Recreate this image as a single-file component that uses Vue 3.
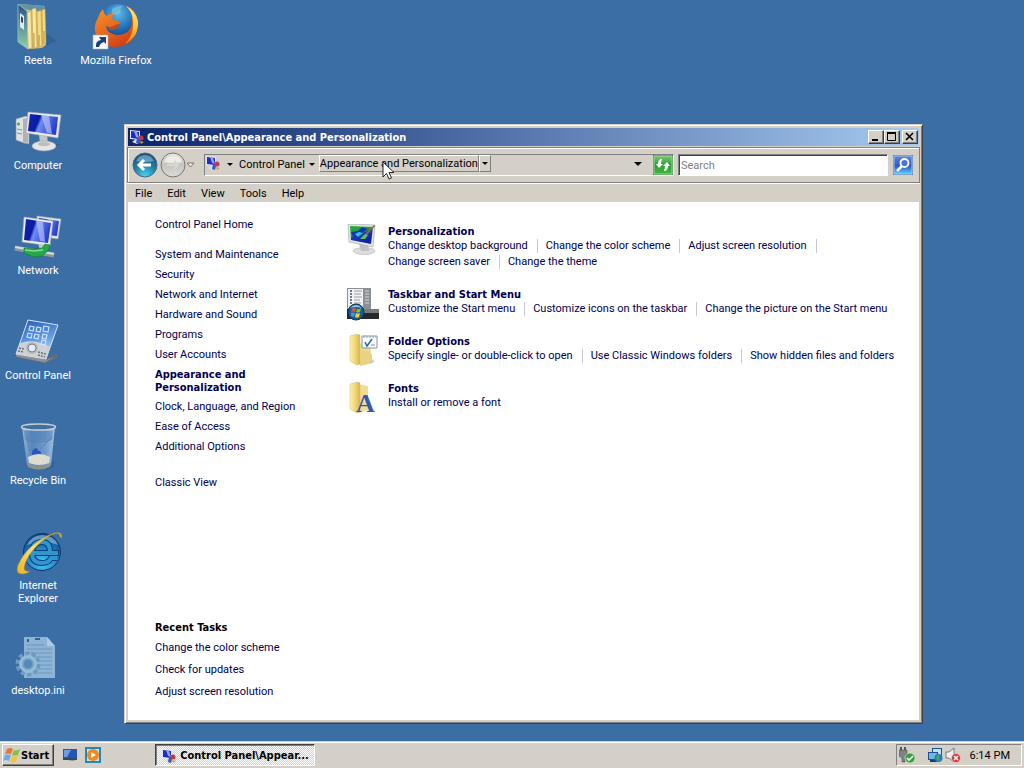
<template>
  <div class="screen">
    <svg class="sprite" aria-hidden="true">
      <defs>
        <linearGradient id="g-screen" x1="0" y1="0" x2="1" y2="0.3">
          <stop offset="0" stop-color="#1226b8" />
          <stop offset="0.4" stop-color="#0a1aa0" />
          <stop offset="0.5" stop-color="#6f8df0" />
          <stop offset="1" stop-color="#2a3fd0" />
        </linearGradient>
        <linearGradient id="g-glass" x1="0" y1="0" x2="0.3" y2="1">
          <stop offset="0" stop-color="#2456b8" />
          <stop offset="0.6" stop-color="#5f9be6" />
          <stop offset="1" stop-color="#b9dcfa" />
        </linearGradient>
        <linearGradient id="g-folder" x1="0" y1="0" x2="1" y2="0">
          <stop offset="0" stop-color="#fdf0b0" />
          <stop offset="0.5" stop-color="#f1d877" />
          <stop offset="1" stop-color="#d9b64e" />
        </linearGradient>
        <linearGradient id="g-cover" x1="0" y1="0" x2="0" y2="1">
          <stop offset="0" stop-color="#234f7c" />
          <stop offset="0.45" stop-color="#5a8fa0" />
          <stop offset="1" stop-color="#8fd0a4" />
        </linearGradient>
        <linearGradient id="g-fox" x1="0" y1="0" x2="0.6" y2="1">
          <stop offset="0" stop-color="#f49a2c" />
          <stop offset="0.6" stop-color="#e8641c" />
          <stop offset="1" stop-color="#cf3f16" />
        </linearGradient>
        <linearGradient id="g-tail" x1="0" y1="0" x2="0" y2="1">
          <stop offset="0" stop-color="#fbe89a" />
          <stop offset="0.6" stop-color="#fbc02c" />
          <stop offset="1" stop-color="#ee7f1d" />
        </linearGradient>
        <radialGradient id="g-globe" cx="0.5" cy="0.25" r="0.7">
          <stop offset="0" stop-color="#5fb8e4" />
          <stop offset="0.6" stop-color="#1f6db4" />
          <stop offset="1" stop-color="#133a78" />
        </radialGradient>
        <radialGradient id="g-ie" cx="0.5" cy="0.8" r="0.8">
          <stop offset="0" stop-color="#4cc8f4" />
          <stop offset="0.5" stop-color="#1c86cc" />
          <stop offset="1" stop-color="#0b3f80" />
        </radialGradient>
        <linearGradient id="g-ring" x1="1" y1="0" x2="0" y2="1">
          <stop offset="0" stop-color="#c8a040" />
          <stop offset="0.5" stop-color="#fbe27a" />
          <stop offset="1" stop-color="#eeb21c" />
        </linearGradient>
        <radialGradient id="g-back" cx="0.5" cy="0.95" r="0.9">
          <stop offset="0" stop-color="#4fd0f0" />
          <stop offset="0.5" stop-color="#2285ae" />
          <stop offset="1" stop-color="#1b4f7c" />
        </radialGradient>
        <linearGradient id="g-forward" x1="0" y1="0" x2="0" y2="1">
          <stop offset="0" stop-color="#e9e8e4" />
          <stop offset="0.5" stop-color="#c6c4be" />
          <stop offset="1" stop-color="#dedcd7" />
        </linearGradient>
        <linearGradient id="g-green" x1="0" y1="0" x2="0" y2="1">
          <stop offset="0" stop-color="#7cc878" />
          <stop offset="0.5" stop-color="#2c9c34" />
          <stop offset="1" stop-color="#43b83c" />
        </linearGradient>
        <linearGradient id="g-find" x1="0" y1="0" x2="0" y2="1">
          <stop offset="0" stop-color="#5f86dc" />
          <stop offset="0.55" stop-color="#2d56c8" />
          <stop offset="1" stop-color="#55d4f4" />
        </linearGradient>
        <linearGradient id="g-paint" x1="0" y1="0" x2="0.5" y2="1">
          <stop offset="0" stop-color="#2fae3a" />
          <stop offset="0.5" stop-color="#1c9a3c" />
          <stop offset="0.55" stop-color="#1a37c8" />
          <stop offset="1" stop-color="#1020a0" />
        </linearGradient>
        <linearGradient id="g-bin" x1="0" y1="0" x2="1" y2="0">
          <stop offset="0" stop-color="#b4cfe8" stop-opacity="0.8" />
          <stop offset="0.3" stop-color="#6c96c8" stop-opacity="0.6" />
          <stop offset="0.7" stop-color="#89aedb" stop-opacity="0.7" />
          <stop offset="1" stop-color="#c3d9ee" stop-opacity="0.8" />
        </linearGradient>
      </defs>

      <symbol id="user-folder" viewBox="0 0 48 48">
        <path d="M32 30l10 8-12 6z" fill="#1d4674" opacity="0.3" />
        <path d="M5 1l26 2 1 39-4 3-14 1z" fill="#d8c070" />
        <path d="M5 1l26 2v6L8 6z" fill="#5e93a8" />
        <path d="M13 10l4-2 1 37-4 1zM18 6l4-1 1 39-4 2z" fill="#f8e6a0" stroke="#b8943c" stroke-width="0.5" />
        <path d="M23 9l4-2 1 36-4 2zM28 7l3-1 1 34-3 4z" fill="#f3da84" stroke="#b8943c" stroke-width="0.5" />
        <path d="M20 30v15M25 32v12M30 28v13" stroke="#a57f2c" stroke-width="0.8" />
        <path d="M4 1l9 7 1 38-10-7z" fill="url(#g-cover)" stroke="#9fc6cc" stroke-width="0.8" />
        <path d="M6 10l4 3v14l-4-3z" fill="#dfeaf0" />
        <path d="M7 13l2 2v5l-2-1z" fill="#35475c" />
      </symbol>

      <symbol id="computer" viewBox="0 0 48 48">
        <path d="M36 36h10l-9 6H20z" fill="#1d4674" opacity="0.35" />
        <path d="M2 11l10-3 3 2v26l-5-1-8-3z" fill="#dfe1e2" stroke="#8e959c" stroke-width="0.6" />
        <path d="M9 11l5-1v25l-5-1z" fill="#adb2b8" />
        <circle cx="4.500" cy="16" r="1.500" fill="#3fae3c" />
        <path d="M3 21l5 1M3 25l5 1" stroke="#8b9298" />
        <path d="M25 26l8 1 1 9h-8z" fill="#c4c7ca" />
        <ellipse cx="30" cy="38" rx="12" ry="5" fill="#e4e5e6" stroke="#9a9ea2" stroke-width="0.6" />
        <ellipse cx="30" cy="36" rx="6" ry="2" fill="#b9bcc0" />
        <path d="M14 4l33 3-3 23-32-5z" fill="#e7e9ea" stroke="#a4a8ad" stroke-width="0.6" />
        <path d="M16 6l28 3-2 18-28-4z" fill="url(#g-screen)" />
        <path d="M27 7l8 1 3 18-5-1z" fill="#c3d0fb" opacity="0.6" />
      </symbol>

      <symbol id="network" viewBox="0 0 48 48">
        <path d="M23 3l24 3-3 20-22-3z" fill="#dfe3e6" stroke="#9aa1a8" stroke-width="0.6" />
        <path d="M25 5l20 3-2 15-20-2z" fill="url(#g-screen)" />
        <path d="M24 30l10 2v9h-7z" fill="#c9ccd0" />
        <path d="M10 4l29 4-3 25-28-4z" fill="#e9ebec" stroke="#a0a5aa" stroke-width="0.6" />
        <path d="M12 6l25 4-3 20-24-3z" fill="url(#g-screen)" />
        <path d="M22 8l7 1 2 20-5-1z" fill="#c3d0fb" opacity="0.6" />
        <path d="M1 35l39 7" stroke="#8d989e" stroke-width="5" />
        <path d="M1 34l39 7" stroke="#d3dcde" stroke-width="2" />
        <path d="M10 35l9 1 9-1 3-4 5 1-2 6-6 5-9 1-9-4z" fill="#24a848" stroke="#0f7a30" stroke-width="0.6" />
        <path d="M11 37l9 1 9-1" fill="none" stroke="#7be090" stroke-width="1.500" />
      </symbol>

      <symbol id="control-panel" viewBox="0 0 48 48">
        <path d="M33 41l10-6-3-8 4 12-11 6z" fill="#6b6f74" />
        <path d="M2 36l31 5 9-3-11 7L2 39z" fill="#8c9094" stroke="#5d6165" stroke-width="0.5" />
        <path d="M14 2l30 5-12 34L2 36z" fill="url(#g-glass)" stroke="#d5e4f3" stroke-width="1" />
        <path d="M6 25q14-5 30 4l-4 12L2 36z" fill="#cfd2d4" />
        <g fill="none" stroke="#cfe2fb" stroke-width="1.200">
          <path d="M16 8l4 1-1 4-4-1zM23 9l4 1-1 4-4-1zM30 8l5 1-1 5-5-1zM14 15l4 1-1 4-4-1zM21 16l4 1-1 4-4-1zM29 16l4 1-1 4-4-1zM28 22l4 1-1 4-4-1z" />
        </g>
        <circle cx="18" cy="30" r="6" fill="#b6babd" />
        <circle cx="18" cy="30" r="4" fill="#e3edfa" stroke="#7c8287" />
        <path d="M4 33l6 1M5 30l5 1M24 34l8 2M24 37l7 2" stroke="#6d7378" stroke-width="1.500" stroke-dasharray="2 1" />
      </symbol>

      <symbol id="recycle-bin" viewBox="0 0 48 48">
        <path d="M30 44l10-6v6l-8 3z" fill="#1d4674" opacity="0.3" />
        <path d="M8 4h33l-4 38q-12 6-24 0z" fill="url(#g-bin)" />
        <path d="M10 8h29l-1 9q-13 6-27 0z" fill="#4d7fb8" opacity="0.5" />
        <path d="M38 14L26 26M13 15l4 18" stroke="#5f82ac" stroke-width="1" />
        <path d="M18 32q-1-6 5-7l1 3q3-1 3 3l-4 4z" fill="#2c53c8" />
        <path d="M14 34q11-6 22 0l-1 6q-10 4-20 0z" fill="#dcdcd0" />
        <path d="M13 40q12 5 24 0l-1 4q-11 5-22 0z" fill="#8c938f" />
        <ellipse cx="24.500" cy="4" rx="17" ry="3" fill="#41709f" stroke="#c5ced6" stroke-width="1.500" />
      </symbol>

      <symbol id="ie" viewBox="0 0 48 48">
        <circle cx="28" cy="24" r="18.500" fill="url(#g-ie)" stroke="#0d386c" />
        <path d="M13 17q5-10 15-10 12 0 16 10-14-6-31 0z" fill="#b6e0f4" opacity="0.5" />
        <path d="M19 25h26M36 24q0-10-8-10-10 0-10 11 0 10 10 10 7 0 9-5h6" fill="none" stroke="#0c3d75" stroke-width="6" />
        <path d="M19 25h25M36 24q0-10-8-10-10 0-10 11 0 10 10 10 7 0 9-5h6" fill="none" stroke="#2f96d0" stroke-width="4" />
        <path d="M48 10q1-9-13-3Q13 17 4 37q-3 9 4 9 5 0 8-3-8 2-5-7Q17 19 37 7q9-4 9 2z" fill="url(#g-ring)" stroke="#b1861e" stroke-width="0.500" />
      </symbol>

      <symbol id="ini-file" viewBox="0 0 48 48">
        <g opacity="0.75">
          <path d="M10 4h23l8 9v32H10z" fill="#a9cbe5" />
          <path d="M33 4l8 9h-8z" fill="#d5e8f4" />
          <path d="M13 12h17M13 16h25M13 20h25M13 24h25M20 28h18M20 32h18M20 36h18M20 40h18" stroke="#7fa6ca" />
          <path d="M14 6v3M21 6h5" stroke="#315f8c" stroke-width="2" />
          <circle cx="14" cy="31" r="10.500" fill="none" stroke="#7ea9c8" stroke-width="4" stroke-dasharray="4 2.600" />
          <circle cx="14" cy="31" r="7.500" fill="#86b3cf" stroke="#b6d7e8" stroke-width="3" />
          <circle cx="14" cy="31" r="4" fill="#5f91ba" />
        </g>
      </symbol>

      <symbol id="firefox" viewBox="0 0 48 48">
        <circle cx="26" cy="20" r="19" fill="url(#g-globe)" />
        <path d="M20 6q5-4 11-3-4 3-2 6-4 4-9 2z" fill="#7fc4e4" opacity="0.6" />
        <path d="M46 18Q44 6 34 3q8 7 6 17-2 12-15 12-10-1-11-9 4 2 8 0 2-2 6-2-1-4-7-4-2-3 1-6-5-1-7 2-3-1-4-7-4 4-5 9-4 6-3 13 3 15 19 16 23 0 24-26z" fill="url(#g-fox)" />
        <path d="M34 3q10 5 12 15 1 16-13 23 9-9 8-22Q41 9 34 3z" fill="url(#g-tail)" />
        <path d="M14 23q4 2 8 0 2-2 6-2-2 5-7 6-4 0-7-4z" fill="#c34818" />
        <rect x="1" y="32" width="15" height="14" fill="#f6f8fa" stroke="#a8b4c0" stroke-width="0.600" />
        <path d="M4 44q-1-6 5-7l-2-3h7v7l-2-2q-4 1-5 5z" fill="#1d3f7a" />
      </symbol>

      <symbol id="panel-small" viewBox="0 0 16 16">
        <path d="M1 1l10 1v9L1 10z" fill="#e6e8ee" />
        <path d="M2 2l8 1v7L2 9z" fill="#1c2cc4" />
        <path d="M5 2l3 1 2 6-3-1z" fill="#8da2f4" />
        <path d="M3 13l4-3 4 3-3 2z" fill="#dadde2" />
        <circle cx="12" cy="9" r="2.500" fill="#c23a40" />
        <path d="M8 9l3 2-1 4-3-1z" fill="#3a55c8" />
        <path d="M11 12l4 1-3 2z" fill="#d89a50" />
      </symbol>

      <symbol id="personalization" viewBox="0 2 32 34">
        <ellipse cx="17" cy="29" rx="11" ry="3.500" fill="#dcdddd" stroke="#aaa" stroke-width="0.500" />
        <path d="M12 22h9l1 7h-8z" fill="#bfc2c5" />
        <path d="M1 2l27 1-2 22-24-5z" fill="#e3e5e6" stroke="#9ea3a7" stroke-width="0.600" />
        <path d="M3 4l23 1-2 17-20-4z" fill="url(#g-paint)" />
        <path d="M4 10l7-1 4-4 6 2-6 4 3 3-7 3-5-2z" fill="#1734b4" />
        <path d="M8 12l4-2 4 1-5 4z" fill="#36c0d8" />
        <path d="M18 12l9-9 1 1-8 9z" fill="#8c6a34" />
        <path d="M13 17l5-5 3 1-3 4z" fill="#64c456" />
      </symbol>

      <symbol id="taskbar-menu" viewBox="0 0 32 34">
        <path d="M0 1h24v21H0z" fill="#8b8f92" />
        <path d="M1 2h15v21H1z" fill="#f1f2f2" />
        <path d="M3 4h2M3 7h2M3 10h2M3 13h2M3 16h2" stroke="#6a7c88" stroke-width="2" />
        <path d="M7 4h8M7 7h7M7 10h8M7 13h6M7 16h7" stroke="#9a9da0" />
        <path d="M18 4h4M18 7h4M18 10h4M18 13h4M18 16h4" stroke="#d5d7d8" />
        <path d="M0 22h32v10H0z" fill="#26292c" />
        <path d="M12 22h20v4H12z" fill="#777b7e" />
        <circle cx="9" cy="25" r="8" fill="#1b5b94" stroke="#11304e" />
        <path d="M3 21q6-6 12 0-6-2-12 0z" fill="#8ccdea" />
        <path d="M5 22q2-2 4-1l-1 4q-2-1-4 0z" fill="#e4562c" />
        <path d="M10 22q2 1 4-1l-1 4q-2 1-4 0z" fill="#7dc242" />
        <path d="M4 26q2-1 4 0l-1 4q-2-1-3-1z" fill="#3f9ce0" />
        <path d="M9 26q2 1 4 0l-1 4q-2 1-4 0z" fill="#fbcb30" />
      </symbol>

      <symbol id="folder-options" viewBox="0 0 32 34">
        <path d="M10 9l14 2v18l-11 3z" fill="#f0dc92" />
        <path d="M14 17q9-1 11 4v8l-12 3z" fill="#ead380" />
        <path d="M3 2l8-2 2 1v29l-3 1-7-4z" fill="url(#g-folder)" stroke="#d5b860" stroke-width="0.500" />
        <path d="M22 30l6-2-2-3z" fill="#a9a9a9" opacity="0.5" />
        <path d="M15 2h15v12H15z" fill="#fcfdfe" stroke="#8492a4" />
        <path d="M16 3h13" stroke="#8da3c2" stroke-dasharray="2 1" />
        <path d="M18 8l2 4 5-7" fill="none" stroke="#2c62b4" stroke-width="1.500" />
        <path d="M24 11h4" stroke="#7b8fb0" />
      </symbol>

      <symbol id="fonts-folder" viewBox="0 0 32 34">
        <path d="M10 3l11 2v24l-9 3z" fill="#f0dc92" />
        <path d="M3 3l8-2 2 1v29l-3 1-7-4z" fill="url(#g-folder)" stroke="#d5b860" stroke-width="0.500" />
      </symbol>

      <symbol id="nav-back" viewBox="0 0 26 26">
        <circle cx="13" cy="13" r="12" fill="url(#g-back)" stroke="#4d6b80" />
        <path d="M4 9q3-6 9-6t9 6q-9 2-18 0z" fill="#bcdcea" opacity="0.45" />
        <path d="M19 13H7M12 8l-5 5 5 5" fill="none" stroke="#fff" stroke-width="3" />
      </symbol>

      <symbol id="nav-forward" viewBox="0 0 26 26">
        <circle cx="13" cy="13" r="12" fill="url(#g-forward)" stroke="#77756f" />
        <path d="M4 10q3-6 9-6t9 6q-9 2-18 0z" fill="#f4f3f0" opacity="0.8" />
        <path d="M7 13h11M14 9l4 4-4 4" fill="none" stroke="#d9d7d2" stroke-width="2" />
      </symbol>

      <symbol id="refresh" viewBox="0 0 20 20">
        <path d="M0 0h20v20H0z" fill="#3e8f44" />
        <path d="M1 1h18v18H1z" fill="url(#g-green)" stroke="#9bd69a" />
        <path d="M9 4q-4 0-4 5H3l3 4 4-4H8q0-2 1-5z" fill="#fff" />
        <path d="M11 16q4 0 4-5h2l-3-4-4 4h2q0 2-1 5z" fill="#fff" />
      </symbol>

      <symbol id="find" viewBox="0 0 20 20">
        <path d="M0 0h20v20H0z" fill="#5c7cae" />
        <path d="M1 1h18v18H1z" fill="url(#g-find)" stroke="#a4c4f0" />
        <circle cx="11.500" cy="8" r="4" fill="#4c74d8" stroke="#fff" stroke-width="1.800" />
        <path d="M8.500 11.500L4 16" stroke="#fff" stroke-width="2.500" />
      </symbol>

      <symbol id="start-flag" viewBox="0 0 18 18">
        <path d="M4 3q3-2 6 0L8 8Q5 7 2 8z" fill="#e8743a" />
        <path d="M11 4q3 1 6-1l-2 6q-3 1-6 0z" fill="#86c04c" />
        <path d="M2 9q3-1 6 0l-2 6q-3-2-6 0z" fill="#6aaee4" />
        <path d="M9 10q3 1 6 0l-2 6q-3 1-6 0z" fill="#f4c440" />
      </symbol>

      <symbol id="show-desktop" viewBox="0 0 16 16">
        <path d="M1 2h14v11H1z" fill="#cfd9e4" />
        <path d="M1 2h14v9H1z" fill="#2555b8" />
        <path d="M2 3h7l-4 7H2z" fill="#6c9ce8" />
        <path d="M1 11h14v2H1z" fill="#34495e" />
        <path d="M5 14l6-1 3 1z" fill="#8a98a4" />
      </symbol>

      <symbol id="media-player" viewBox="0 0 16 16">
        <path d="M0 0h16v16H0z" fill="#2589b8" />
        <path d="M2 2h12v12H2z" fill="#cde2e6" />
        <circle cx="8" cy="8" r="6" fill="#f08a1c" />
        <path d="M6 5l5 3-5 3z" fill="#fff" />
      </symbol>

      <symbol id="tray-usb" viewBox="0 0 16 16">
        <path d="M2 0v3M6 0v3" stroke="#55585a" stroke-width="2" />
        <path d="M0 3h8v6l-2 2v4H3v-4L0 9z" fill="#7e8284" stroke="#4e5254" stroke-width="0.600" />
        <circle cx="11" cy="11" r="5" fill="#35a038" stroke="#e6f2e4" stroke-width="0.600" />
        <path d="M8 11l2 2 4-4" fill="none" stroke="#fff" stroke-width="1.600" />
      </symbol>

      <symbol id="tray-network" viewBox="0 0 16 16">
        <path d="M5 1h10v8H5z" fill="#1d4f92" />
        <path d="M6 2h8v6H6z" fill="#bfe1f4" />
        <path d="M1 5h10v8H1z" fill="#1d4f92" />
        <path d="M2 6h8v6H2z" fill="#6fb8e6" />
        <path d="M3 14h7" stroke="#1d3d66" stroke-width="2" />
        <circle cx="11.500" cy="11" r="4" fill="#2478c4" />
        <path d="M9 10q2-3 4-2l-1 3 1 3-3-1z" fill="#46b04c" />
      </symbol>

      <symbol id="tray-volume" viewBox="0 0 16 16">
        <path d="M1 5h3l5-4v14l-5-4H1z" fill="#f1f1ef" stroke="#77797a" />
        <circle cx="11" cy="11" r="4.500" fill="#d43a3a" stroke="#f5d5d5" stroke-width="0.600" />
        <path d="M9 9l4 4M13 9l-4 4" stroke="#fff" stroke-width="1.500" />
      </symbol>
    </svg>

    <main class="desktop">
      <a v-for="item in desktopIcons" :key="item.label" class="shortcut" href="#">
        <svg class="shortcut-icon" aria-hidden="true"><use :href="'#' + item.icon" /></svg>
        <span>{{ item.label }}</span>
      </a>

      <section class="window">
        <header class="titlebar">
          <svg class="icon16" aria-hidden="true"><use href="#panel-small" /></svg>
          <h1>Control Panel\Appearance and Personalization</h1>
          <div class="caption-buttons">
            <button class="caption" aria-label="Minimize">
              <svg viewBox="0 0 12 10"><path d="M2 8h6" stroke="#000" stroke-width="2" /></svg>
            </button>
            <button class="caption" aria-label="Maximize">
              <svg viewBox="0 0 12 10"><path d="M1.500 1v7.500h8V1" fill="none" stroke="#000" /><path d="M1 1h9" stroke="#000" stroke-width="2" /></svg>
            </button>
            <button class="caption close" aria-label="Close">
              <svg viewBox="0 0 12 10"><path d="M2 1l7 7M9 1L2 8" stroke="#000" stroke-width="1.600" /></svg>
            </button>
          </div>
        </header>

        <div class="toolbar">
          <button class="nav" aria-label="Back"><svg><use href="#nav-back" /></svg></button>
          <button class="nav forward" aria-label="Forward"><svg><use href="#nav-forward" /></svg></button>
          <button class="history" aria-label="Recent pages">
            <svg viewBox="0 0 9 6"><path d="M1 1h7L4.500 5z" fill="#f4f2ee" stroke="#77756f" /></svg>
          </button>

          <div class="address">
            <svg class="icon16" aria-hidden="true"><use href="#panel-small" /></svg>
            <button class="arrow" aria-label="Locations"><i></i></button>
            <button class="crumb">Control Panel</button>
            <button class="arrow narrow" aria-label="Control Panel items"><i></i></button>
            <button class="crumb hot">Appearance and Personalization</button>
            <button class="arrow hot" aria-label="Subfolders"><i></i></button>
            <button class="arrow previous" aria-label="Previous locations"><i class="big"></i></button>
            <button class="square" aria-label="Refresh"><svg><use href="#refresh" /></svg></button>
          </div>

          <input v-model="query" class="search" type="text" placeholder="Search" aria-label="Search" />
          <button class="square" aria-label="Start search"><svg><use href="#find" /></svg></button>
        </div>

        <nav class="menubar">
          <button v-for="menu in menus" :key="menu">{{ menu }}</button>
        </nav>

        <div class="content">
          <aside class="sidebar">
            <a href="#" class="home">Control Panel Home</a>
            <a
              v-for="category in categories"
              :key="category"
              href="#"
              :class="{ current: category === currentCategory }"
            >{{ category }}</a>
            <a href="#" class="classic">Classic View</a>
            <div class="recent">
              <h2>Recent Tasks</h2>
              <a v-for="task in recentTasks" :key="task" href="#">{{ task }}</a>
            </div>
          </aside>

          <div class="groups">
            <article v-for="group in groups" :key="group.title" class="group">
              <svg class="group-icon" aria-hidden="true">
                <use :href="'#' + group.icon" />
                <text v-if="group.letter" x="9" y="31">{{ group.letter }}</text>
              </svg>
              <div class="group-body">
                <a href="#" class="group-title">{{ group.title }}</a>
                <ul>
                  <li v-for="link in group.links" :key="link"><a href="#">{{ link }}</a></li>
                </ul>
              </div>
            </article>
          </div>
        </div>
      </section>

      <svg class="cursor" viewBox="0 0 13 20" aria-hidden="true">
        <path d="M1 1v15l3.500-3.500L7 18l2.500-1L7 11.500h5z" fill="#fff" stroke="#222" />
      </svg>
    </main>

    <footer class="taskbar">
      <button class="start">
        <svg aria-hidden="true"><use href="#start-flag" /></svg>
        Start
      </button>
      <div class="quick-launch">
        <button aria-label="Show desktop"><svg class="icon16"><use href="#show-desktop" /></svg></button>
        <button aria-label="Media player"><svg class="icon16"><use href="#media-player" /></svg></button>
      </div>
      <button class="task">
        <svg class="icon16" aria-hidden="true"><use href="#panel-small" /></svg>
        <span>Control Panel\Appear...</span>
      </button>
      <div class="tray">
        <svg class="icon16 usb" aria-hidden="true"><use href="#tray-usb" /></svg>
        <svg class="icon16" aria-hidden="true"><use href="#tray-network" /></svg>
        <svg class="icon16" aria-hidden="true"><use href="#tray-volume" /></svg>
        <time>6:14 PM</time>
      </div>
    </footer>
  </div>
</template>

<script setup>
import { ref } from 'vue';

const query = ref('');

const desktopIcons = [
  { label: 'Reeta', icon: 'user-folder' },
  { label: 'Computer', icon: 'computer' },
  { label: 'Network', icon: 'network' },
  { label: 'Control Panel', icon: 'control-panel' },
  { label: 'Recycle Bin', icon: 'recycle-bin' },
  { label: 'Internet Explorer', icon: 'ie' },
  { label: 'desktop.ini', icon: 'ini-file' },
  { label: 'Mozilla Firefox', icon: 'firefox' }
];

const menus = ['File', 'Edit', 'View', 'Tools', 'Help'];

const currentCategory = 'Appearance and Personalization';

const categories = [
  'System and Maintenance',
  'Security',
  'Network and Internet',
  'Hardware and Sound',
  'Programs',
  'User Accounts',
  'Appearance and Personalization',
  'Clock, Language, and Region',
  'Ease of Access',
  'Additional Options'
];

const recentTasks = ['Change the color scheme', 'Check for updates', 'Adjust screen resolution'];

const groups = [
  {
    title: 'Personalization',
    icon: 'personalization',
    links: [
      'Change desktop background',
      'Change the color scheme',
      'Adjust screen resolution',
      'Change screen saver',
      'Change the theme'
    ]
  },
  {
    title: 'Taskbar and Start Menu',
    icon: 'taskbar-menu',
    links: [
      'Customize the Start menu',
      'Customize icons on the taskbar',
      'Change the picture on the Start menu'
    ]
  },
  {
    title: 'Folder Options',
    icon: 'folder-options',
    links: [
      'Specify single- or double-click to open',
      'Use Classic Windows folders',
      'Show hidden files and folders'
    ]
  },
  {
    title: 'Fonts',
    icon: 'fonts-folder',
    letter: 'A',
    links: ['Install or remove a font']
  }
];
</script>

<style>
body {
  margin: 0;
  background: #3a6ea5;
}
</style>

<style scoped>
.screen {
  --bold-font: "DejaVu Sans Condensed", "DejaVu Sans", sans-serif;
  display: flex;
  flex-direction: column;
  height: 100vh;
  overflow: hidden;
  font-family: Tahoma, Roboto, sans-serif;
  font-size: 11px;
  line-height: 13px;
  color: #000;
}

.sprite {
  position: absolute;
  width: 0;
  height: 0;
}

button {
  padding: 0;
  border: none;
  background: none;
  font: inherit;
  color: inherit;
}

button svg {
  display: block;
}

a {
  color: #00004c;
  text-decoration: none;
}

h1,
h2 {
  margin: 0;
  font-family: var(--bold-font);
  font-size: 11px;
}

.icon16 {
  flex: none;
  width: 16px;
  height: 16px;
}

/* Desktop */
.desktop {
  position: relative;
  flex: 1;
  display: grid;
  grid-template-rows: repeat(7, 105px);
  grid-auto-columns: 76px;
  grid-auto-flow: column;
  column-gap: 2px;
  padding-top: 3px;
  min-height: 0;
  box-sizing: border-box;
  background: #3a6ea5;
}

.shortcut {
  display: flex;
  flex-direction: column;
  align-items: center;
  gap: 3px;
  color: #fff;
  text-align: center;
}

.shortcut-icon {
  width: 48px;
  height: 48px;
}

.cursor {
  position: absolute;
  left: 382px;
  top: 161px;
  width: 13px;
  height: 20px;
}

/* Window */
.window {
  position: absolute;
  inset: 124px 101px 17px 124px;
  display: flex;
  flex-direction: column;
  padding: 2px;
  border: 1px solid;
  border-color: #d4d0c8 #404040 #404040 #d4d0c8;
  box-shadow: inset 1px 1px #fff, inset -1px -1px #808080;
  background: #d4d0c8;
}

.titlebar {
  display: flex;
  align-items: center;
  gap: 2px;
  height: 18px;
  margin: 1px 1px 0;
  padding: 0 1px;
  background: linear-gradient(to right, #0a246a, #a6caf0);
  color: #fff;
}

.titlebar h1 {
  flex: 1;
}

.caption-buttons {
  display: flex;
}

.caption {
  width: 16px;
  height: 14px;
  border: 1px solid;
  border-color: #fff #404040 #404040 #fff;
  box-shadow: inset -1px -1px #808080;
  background: #d4d0c8;
}

.caption svg {
  width: 12px;
  height: 10px;
  margin: 1px;
}

.caption.close {
  margin-left: 2px;
}

.toolbar {
  display: flex;
  align-items: center;
  height: 34px;
  margin-top: 1px;
  padding: 0 6px 0 4px;
  border: 1px solid #808080;
  box-shadow: inset 1px 1px #fff, 0 1px #fff;
}

.nav svg {
  width: 26px;
  height: 26px;
}

.nav.forward {
  margin-left: 2px;
}

.history svg {
  width: 9px;
  height: 6px;
}

.address {
  flex: 1;
  display: flex;
  align-items: flex-start;
  height: 20px;
  margin: 0 4px 0 9px;
  border: 1px solid;
  border-color: #808080 #fff #fff #808080;
}

.arrow {
  display: flex;
  align-items: center;
  justify-content: center;
  width: 17px;
  height: 18px;
}

.arrow i {
  border: 3px solid transparent;
  border-top-color: #000;
  border-bottom: none;
}

.arrow i.big {
  border-width: 4px;
  border-bottom: none;
}

.arrow.narrow {
  width: 13px;
}

.crumb {
  height: 18px;
  padding: 0 1px;
  white-space: nowrap;
}

.crumb.hot,
.arrow.hot {
  height: 17px;
  border: 1px solid;
  border-color: #fff #808080 #808080 #fff;
}

.crumb.hot {
  padding: 0;
}

.arrow.hot {
  width: 12px;
}

.arrow.previous {
  margin-left: auto;
  margin-right: 7px;
}

.square svg {
  width: 20px;
  height: 20px;
}

.search {
  width: 210px;
  height: 22px;
  margin-right: 5px;
  padding: 1px 2px 0;
  box-sizing: border-box;
  border: 1px solid;
  border-color: #808080 #fff #fff #808080;
  box-shadow: inset 1px 1px #404040;
  border-radius: 0;
  outline: none;
  background: #fff;
  font: inherit;
}

.search::placeholder {
  color: #808080;
  opacity: 1;
}

.menubar {
  display: flex;
  gap: 15px;
  height: 18px;
  padding: 1px 0 0 8px;
}

.content {
  flex: 1;
  display: flex;
  min-height: 0;
  margin: 0 1px 1px;
  background: #fff;
}

/* Task pane */
.sidebar {
  display: flex;
  flex-direction: column;
  align-items: flex-start;
  gap: 7px;
  width: 165px;
  padding: 16px 27px 22px;
}

.home {
  margin-bottom: 10px;
}

.current {
  width: 110px;
  margin-bottom: -1px;
  font-family: var(--bold-font);
  font-weight: bold;
}

.classic {
  margin-top: 16px;
}

.recent {
  display: flex;
  flex-direction: column;
  gap: 9px;
  margin-top: auto;
}

.recent h2 {
  margin-bottom: -2px;
}

/* Category groups */
.groups {
  flex: 1;
  display: flex;
  flex-direction: column;
  gap: 19px;
  padding-top: 24px;
}

.group {
  display: flex;
  gap: 9px;
}

.group-icon {
  flex: none;
  width: 32px;
  height: 34px;
  margin: -2px 0 -4px;
  overflow: visible;
}

.group-icon text {
  fill: #3158b4;
  font-family: "Liberation Serif", serif;
  font-size: 26px;
  font-weight: bold;
}

.group-title {
  display: block;
  line-height: 12px;
  font-family: var(--bold-font);
  font-weight: bold;
}

.group ul {
  display: flex;
  flex-wrap: wrap;
  margin: 0;
  padding: 0;
  list-style: none;
  line-height: 16px;
}

.group li {
  display: flex;
  align-items: center;
  white-space: nowrap;
}

.group li:not(:last-child)::after {
  content: "";
  width: 1px;
  height: 14px;
  margin: 0 8px 0 9px;
  background: #c8c8d4;
}

/* Taskbar */
.taskbar {
  display: flex;
  align-items: center;
  height: 26px;
  padding: 0 2px;
  border-top: 1px solid #d4d0c8;
  box-shadow: inset 0 1px #fff;
  background: #d4d0c8;
}

.start {
  display: flex;
  align-items: center;
  height: 22px;
  padding: 0 4px 0 0;
  border: 1px solid;
  border-color: #fff #404040 #404040 #fff;
  box-shadow: inset -1px -1px #808080;
  font-family: var(--bold-font);
  font-weight: bold;
}

.start svg {
  width: 18px;
  height: 18px;
}

.quick-launch {
  display: flex;
  gap: 7px;
  margin: 0 54px 0 8px;
}

.task {
  display: flex;
  align-items: center;
  gap: 3px;
  width: 160px;
  height: 22px;
  padding: 1px 0 0 5px;
  border: 1px solid;
  border-color: #404040 #fff #fff #404040;
  box-shadow: inset 1px 1px #808080;
  background: repeating-conic-gradient(#fff 0 25%, #d4d0c8 0 50%) 0 0 / 2px 2px;
  font-family: var(--bold-font);
  font-weight: bold;
  white-space: nowrap;
}

.tray {
  display: flex;
  align-items: center;
  gap: 2px;
  height: 20px;
  margin-left: auto;
  padding: 0 11px 0 2px;
  border: 1px solid;
  border-color: #808080 #fff #fff #808080;
}

.usb {
  margin-right: 10px;
}

.tray time {
  margin-left: 7px;
}
</style>
